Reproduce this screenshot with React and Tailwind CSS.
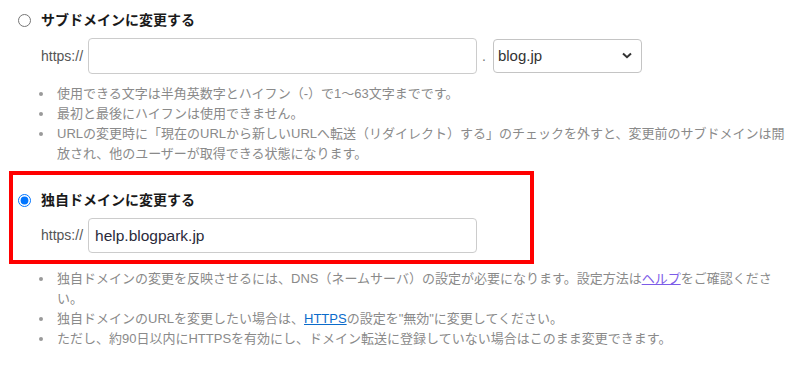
import React from "react";

const SUB_NOTES = [
  "使用できる文字は半角英数字とハイフン（-）で1〜63文字までです。",
  "最初と最後にハイフンは使用できません。",
  "URLの変更時に「現在のURLから新しいURLへ転送（リダイレクト）する」のチェックを外すと、変更前のサブドメインは開放され、他のユーザーが取得できる状態になります。",
];

const OWN_NOTES = [
  <>
    独自ドメインの変更を反映させるには、DNS（ネームサーバ）の設定が必要になります。設定方法は
    <a href="#" className="text-[#7c5ce8] underline">ヘルプ</a>
    をご確認ください。
  </>,
  <>
    独自ドメインのURLを変更したい場合は、
    <a href="#" className="text-[#0b6bcb] underline">HTTPS</a>
    の設定を"無効"に変更してください。
  </>,
  "ただし、約90日以内にHTTPSを有効にし、ドメイン転送に登録していない場合はこのまま変更できます。",
];

function Notes({ items, className }) {
  return (
    <ul className={"pl-[39px] pr-[9px] " + className}>
      {items.map((item, i) => (
        <li key={i} className="flex text-[13px] leading-[20px] text-[#8a8a8a]">
          <span className="flex h-[20px] w-[18px] shrink-0 items-center">
            <span className="h-[4px] w-[4px] rounded-full bg-[#9a9a9a]" />
          </span>
          <span className="flex-1">{item}</span>
        </li>
      ))}
    </ul>
  );
}

function Choice({ checked, label }) {
  return (
    <label className="flex h-[20px] items-center gap-[10px]">
      <input type="radio" name="domain" defaultChecked={checked} className="m-0 h-[13px] w-[13px]" />
      <span className="text-[14px] font-bold text-[#1a1a1a]">{label}</span>
    </label>
  );
}

export default function App() {
  return (
    <div className="h-[365px] w-[799px] overflow-hidden bg-white font-['Liberation_Sans','Noto_Sans_CJK_JP',sans-serif]">
      <div className="ml-[18px] mt-[10px]">
        <Choice label="サブドメインに変更する" />
      </div>
      <div className="ml-[41px] mt-[8px] flex items-center">
        <span className="text-[14px] text-[#555]">https://</span>
        <input
          type="text"
          className="ml-[5px] h-[36px] w-[389px] rounded-[4px] border border-[#cccccc] bg-white outline-none"
        />
        <span className="ml-[5px] mr-[7px] text-[14px] text-[#777]">.</span>
        <div className="relative h-[34px] w-[149px]">
          <select
            defaultValue="blog.jp"
            className="h-full w-full appearance-none rounded-[4px] border border-[#c4c4c4] bg-white pl-[4px] text-[15px] text-[#333] outline-none"
          >
            <option>blog.jp</option>
          </select>
          <svg
            className="pointer-events-none absolute right-[10px] top-[13px]"
            width="10"
            height="7"
            viewBox="0 0 10 7"
          >
            <path d="M1 1.5 L5 5.2 L9 1.5" fill="none" stroke="#333" strokeWidth="2" />
          </svg>
        </div>
      </div>
      <Notes items={SUB_NOTES} className="mt-[10px]" />

      <div className="ml-[9px] mt-[7px] w-[525px] border-4 border-[#ff0000] pb-[7px] pl-[5px] pt-[15px]">
        <Choice checked label="独自ドメインに変更する" />
        <div className="ml-[23px] mt-[8px] flex items-center">
          <span className="text-[14px] text-[#555]">https://</span>
          <input
            type="text"
            defaultValue="help.blogpark.jp"
            className="ml-[5px] h-[35px] w-[389px] rounded-[4px] border border-[#cccccc] bg-white pl-[6px] text-[15.5px] text-[#2a2a3a] outline-none"
          />
        </div>
      </div>
      <Notes items={OWN_NOTES} className="mt-[5px]" />
    </div>
  );
}
